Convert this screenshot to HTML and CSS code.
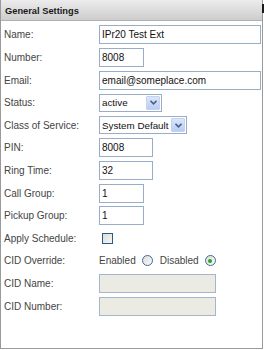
FILE: index.html
```html
<!DOCTYPE html>
<html>
<head>
<meta charset="utf-8">
<link rel="stylesheet" href="styles.css">
</head>
<body>
<div class="panel">
  <div class="head">
    <span class="title">General Settings</span>
    <span class="edge"></span>
  </div>
  <div class="form">
    <div class="row"><span class="lbl">Name:</span><input class="txt w162" value="IPr20 Test Ext"></div>
    <div class="row"><span class="lbl">Number:</span><input class="txt w45" value="8008"></div>
    <div class="row"><span class="lbl">Email:</span><input class="txt w162" value="email@someplace.com"></div>
    <div class="row"><span class="lbl">Status:</span>
      <div class="sel w63"><span class="sv">active</span><span class="btn"><svg width="7" height="5" viewBox="0 0 7 5"><path d="M0.5 0.8 L3.5 3.8 L6.5 0.8" fill="none" stroke="#4d6185" stroke-width="1.6"/></svg></span></div>
    </div>
    <div class="row"><span class="lbl">Class of Service:</span>
      <div class="sel w88"><span class="sv">System Default</span><span class="btn"><svg width="7" height="5" viewBox="0 0 7 5"><path d="M0.5 0.8 L3.5 3.8 L6.5 0.8" fill="none" stroke="#4d6185" stroke-width="1.6"/></svg></span></div>
    </div>
    <div class="row"><span class="lbl">PIN:</span><input class="txt w54" value="8008"></div>
    <div class="row"><span class="lbl">Ring Time:</span><input class="txt w54" value="32"></div>
    <div class="row"><span class="lbl">Call Group:</span><input class="txt w45" value="1"></div>
    <div class="row"><span class="lbl">Pickup Group:</span><input class="txt w45" value="1"></div>
    <div class="row"><span class="lbl">Apply Schedule:</span><span class="chk"></span></div>
    <div class="row"><span class="lbl">CID Override:</span>
      <div class="radios"><span class="rt">Enabled</span><span class="radio"></span><span class="rt">Disabled</span><span class="radio on"></span></div>
    </div>
    <div class="row"><span class="lbl">CID Name:</span><input class="txt w117 dis" value=""></div>
    <div class="row"><span class="lbl">CID Number:</span><input class="txt w117 dis" value=""></div>
  </div>
</div>
</body>
</html>
```
FILE: styles.css
```css
html, body { margin: 0; padding: 0; background: #fff; }
body { width: 264px; height: 350px; overflow: hidden; font-family: "Liberation Sans", Arial, sans-serif; }
.panel {
  width: 261px; height: 348px;
  border: 1px solid #9a9a9a; border-top: none;
  position: relative;
}
.head {
  height: 20px;
  border-bottom: 1px solid #b0b0b0;
  background: linear-gradient(#ececec, #cdcdcd);
  display: flex; align-items: center; justify-content: space-between;
}
.title { font-weight: bold; font-size: 9.3px; color: #1a1a1a; padding-left: 4px; padding-top: 1px; }
.edge { position: absolute; right: -2px; top: 4px; width: 2px; height: 9px; background: #1a1a1a; }
.form { padding-top: 2.6px; }
.row { height: 22.6px; display: flex; align-items: center; }
.lbl { width: 95px; padding-left: 3px; font-size: 10px; color: #444; flex: none; }
.txt {
  box-sizing: border-box; height: 19px; margin: 0; padding: 0 2px;
  border: 1px solid #98aec8; background: #fff;
  font-family: "Liberation Sans", Arial, sans-serif; font-size: 10px; color: #111;
  outline: none;
}
.w162 { width: 162px; }
.w45 { width: 45px; }
.w54 { width: 54px; }
.w117 { width: 117px; }
.w63 { width: 63px; }
.w88 { width: 88px; }
.dis { background: #ebebe4; border-color: #a6b6ca; }
.sel {
  box-sizing: border-box; height: 18px; border: 1px solid #98aec8; background: #fff;
  display: flex; align-items: center; justify-content: space-between; padding: 1px;
}
.sv { font-size: 9.8px; color: #111; padding-left: 1px; white-space: nowrap; }
.btn {
  box-sizing: border-box; width: 14px; height: 14px; flex: none;
  background: linear-gradient(#dbe6fb, #b9ccf3); border: 1px solid #c3d2ee; border-radius: 1px;
  display: flex; align-items: center; justify-content: center;
}
.chk {
  box-sizing: border-box; width: 11px; height: 11px; margin-left: 3px;
  border: 1px solid #2e5a86; background: linear-gradient(135deg, #dcdcd6, #f6f6f4);
}
.radios { display: flex; align-items: center; }
.rt { font-size: 10px; color: #444; }
.radio {
  box-sizing: border-box; width: 11px; height: 11px; border-radius: 50%;
  border: 1px solid #3f6a96; background: linear-gradient(135deg, #dcdcd6, #fafafa);
  margin: 0 7px 0 6px; position: relative;
}
.radio.on::after {
  content: ""; position: absolute; left: 2.5px; top: 2.5px; width: 4px; height: 4px; border-radius: 50%;
  background: #2aa32a;
}
```
